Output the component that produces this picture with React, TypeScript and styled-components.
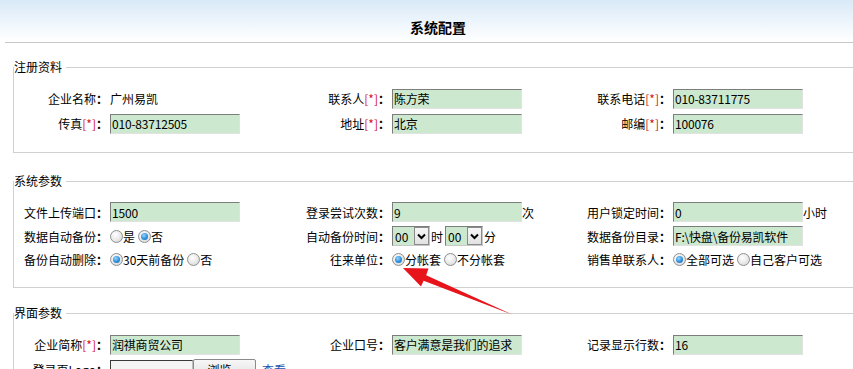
import React from "react";
import styled, { createGlobalStyle, css } from "styled-components";

const Global = createGlobalStyle`
  html, body { margin: 0; padding: 0; background: #fff; overflow: hidden; }
  body { font-family: "Noto Sans CJK SC", "Noto Sans", sans-serif; font-size: 12px; color: #000; }
`;

const Page = styled.div`
  position: relative;
  width: 880px;
`;

const Header = styled.header`
  height: 44px;
  padding-left: 5px;
  background: linear-gradient(to bottom, #d8e9f7 0px, #eaf3fb 18px, #ffffff 42px);
`;

const Title = styled.h1`
  margin: 0;
  width: 866px;
  height: 43px;
  box-sizing: border-box;
  border-bottom: 1px solid #c8c8c8;
  font-size: 14px;
  font-weight: bold;
  line-height: 14px;
  padding-top: 20px;
  text-align: center;
  color: #000;
`;

const Set = styled.fieldset<{ $top: number; $bottom: number }>`
  margin: ${(p) => p.$top}px 0 0 13px;
  width: 850px;
  box-sizing: border-box;
  border: 1px solid #d0d0d0;
  padding: 12px 0 ${(p) => p.$bottom}px 0;
  min-width: 0;
`;

const Legend = styled.legend`
  padding: 0 4px 0 0;
  margin: 0;
  font-size: 12px;
  line-height: 14px;
  color: #000;
`;

const Grid = styled.div<{ $rows: string }>`
  display: grid;
  grid-template-columns: 96px 181px 101px 180px 101px 1fr;
  grid-template-rows: ${(p) => p.$rows};
`;

const Label = styled.div`
  display: flex;
  align-items: center;
  justify-content: flex-end;
  padding-right: 2px;
  white-space: nowrap;
`;

const Req = styled.span`
  color: #d4101c;
`;

const Colon = styled.b`
  font-weight: bold;
`;

const Cell = styled.div`
  display: flex;
  align-items: center;
  white-space: nowrap;
`;

const Input = styled.input`
  width: 130px;
  height: 20px;
  box-sizing: border-box;
  border: 1px solid;
  border-color: #7d7d7d #e2e2e2 #e2e2e2 #7d7d7d;
  background: #cce8cf;
  font-family: "Noto Sans CJK SC", "Noto Sans", sans-serif;
  font-size: 12px;
  color: #000;
  padding: 0 1px;
  margin: 0;
  outline: none;
  letter-spacing: -0.2px;
`;

const Select = styled.div`
  display: inline-flex;
  width: 38px;
  height: 20px;
  box-sizing: border-box;
  border: 1px solid;
  border-color: #7d7d7d #c8c8c8 #c8c8c8 #7d7d7d;
  background: #cce8cf;
  align-items: stretch;
`;

const SelVal = styled.span`
  flex: 1;
  display: flex;
  align-items: center;
  padding-left: 2px;
  font-size: 12px;
`;

const SelBtn = styled.span`
  width: 15px;
  box-sizing: border-box;
  border: 1px solid #8a8a8a;
  background: linear-gradient(#f6f6f6, #e2e2e2);
  display: flex;
  align-items: center;
  justify-content: center;
`;

const Unit = styled.span`
  margin: 0 2px 0 1px;
`;

const Radio = styled.span<{ $on?: boolean }>`
  position: relative;
  display: inline-block;
  width: 13px;
  height: 13px;
  box-sizing: border-box;
  border-radius: 50%;
  border: 1px solid #8e8f8f;
  background: radial-gradient(circle at 40% 35%, #ffffff 0%, #e8e8e8 55%, #cfcfcf 100%);
  margin-right: 0;
  ${(p) =>
    p.$on &&
    css`
      &::after {
        content: "";
        position: absolute;
        left: 2px;
        top: 2px;
        width: 7px;
        height: 7px;
        border-radius: 50%;
        background: radial-gradient(circle at 40% 35%, #9bd5fb 0%, #2b8fdc 55%, #1567b5 100%);
      }
    `}
`;

const RadioItem = styled.label`
  display: inline-flex;
  align-items: center;
  margin-right: 3px;
`;

const FileBox = styled.span`
  display: inline-block;
  width: 83px;
  height: 20px;
  box-sizing: border-box;
  border: 1px solid;
  border-color: #3a3a3a #bdbdbd #bdbdbd #3a3a3a;
  background: #f4f4f4;
`;

const Browse = styled.span`
  display: inline-flex;
  align-items: center;
  justify-content: center;
  width: 63px;
  height: 22px;
  box-sizing: border-box;
  border: 1px solid #8a8a8a;
  border-radius: 2px;
  background: linear-gradient(#f7f7f7, #dedede);
  font-size: 12px;
`;

const Link = styled.a`
  color: #1a55b0;
  margin-left: 6px;
  text-decoration: none;
`;

const ArrowLayer = styled.svg`
  position: absolute;
  left: 0;
  top: 0;
  pointer-events: none;
`;

const Chevron = () => (
  <svg width="9" height="7" viewBox="0 0 9 7">
    <path d="M1 1.5 L4.5 5 L8 1.5" fill="none" stroke="#000" strokeWidth="2" />
  </svg>
);

const F = ({ label, req }: { label: string; req?: boolean }) => (
  <Label>
    {label}
    {req && <Req>[*]</Req>}
    <Colon>：</Colon>
  </Label>
);

const Sel = ({ v }: { v: string }) => (
  <Select>
    <SelVal>{v}</SelVal>
    <SelBtn>
      <Chevron />
    </SelBtn>
  </Select>
);

const R = ({ on, text }: { on?: boolean; text: string }) => (
  <RadioItem>
    <Radio $on={on} />
    {text}
  </RadioItem>
);

export default function App() {
  return (
    <Page>
      <Global />
      <Header>
        <Title>系统配置</Title>
      </Header>

      <Set $top={16} $bottom={16}>
        <Legend>注册资料</Legend>
        <Grid $rows="25px 25px">
          <F label="企业名称" />
          <Cell>广州易凯</Cell>
          <F label="联系人" req />
          <Cell>
            <Input readOnly value="陈方荣" />
          </Cell>
          <F label="联系电话" req />
          <Cell>
            <Input readOnly value="010-83711775" />
          </Cell>
          <F label="传真" req />
          <Cell>
            <Input readOnly value="010-83712505" />
          </Cell>
          <F label="地址" req />
          <Cell>
            <Input readOnly value="北京" />
          </Cell>
          <F label="邮编" req />
          <Cell>
            <Input readOnly value="100076" />
          </Cell>
        </Grid>
      </Set>

      <Set $top={21} $bottom={17}>
        <Legend>系统参数</Legend>
        <Grid $rows="24px 24px 22px">
          <F label="文件上传端口" />
          <Cell>
            <Input readOnly value="1500" />
          </Cell>
          <F label="登录尝试次数" />
          <Cell>
            <Input readOnly value="9" />
            次
          </Cell>
          <F label="用户锁定时间" />
          <Cell>
            <Input readOnly value="0" />
            小时
          </Cell>

          <F label="数据自动备份" />
          <Cell>
            <R text="是" />
            <R on text="否" />
          </Cell>
          <F label="自动备份时间" />
          <Cell>
            <Sel v="00" />
            <Unit>时</Unit>
            <Sel v="00" />
            <Unit>分</Unit>
          </Cell>
          <F label="数据备份目录" />
          <Cell>
            <Input readOnly value="F:\快盘\备份易凯软件" />
          </Cell>

          <F label="备份自动删除" />
          <Cell>
            <R on text="30天前备份" />
            <R text="否" />
          </Cell>
          <F label="往来单位" />
          <Cell>
            <R on text="分帐套" />
            <R text="不分帐套" />
          </Cell>
          <F label="销售单联系人" />
          <Cell>
            <R on text="全部可选" />
            <R text="自己客户可选" />
          </Cell>
        </Grid>
      </Set>

      <Set $top={18} $bottom={16}>
        <Legend>界面参数</Legend>
        <Grid $rows="25px 25px">
          <F label="企业简称" req />
          <Cell>
            <Input readOnly value="润祺商贸公司" />
          </Cell>
          <F label="企业口号" />
          <Cell>
            <Input readOnly value="客户满意是我们的追求" />
          </Cell>
          <F label="记录显示行数" />
          <Cell>
            <Input readOnly value="16" />
          </Cell>
          <F label="登录页Logo" />
          <Cell>
            <FileBox />
            <Browse>浏览...</Browse>
            <Link href="#">查看</Link>
          </Cell>
          <Label />
          <Cell />
          <Label />
          <Cell />
        </Grid>
      </Set>

      <ArrowLayer width="880" height="369" viewBox="0 0 880 369">
        <polygon
          points="403,268 428.5,268.5 426.2,275.2 513,315 423.6,280.8 421,286.5"
          fill="#e8141c"
        />
      </ArrowLayer>
    </Page>
  );
}
